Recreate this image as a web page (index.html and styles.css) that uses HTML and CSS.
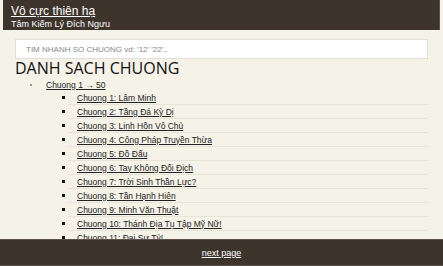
FILE: index.html
```html
<!DOCTYPE html>
<html lang="vi">
<head>
<meta charset="utf-8">
<title>Vô cực thiên hạ</title>
<link rel="stylesheet" href="styles.css">
</head>
<body>
<header class="top">
  <a class="book-title" href="#">Vô cực thiên hạ</a>
  <div class="author">Tâm Kiếm Lý Đích Ngưu</div>
</header>
<main class="content">
  <input class="search" type="text" placeholder="TIM NHANH SO CHUONG vd: '12' '22'..">
  <h1 class="heading">DANH SACH CHUONG</h1>
  <ul class="groups">
    <li class="group">
      <div class="group-row"><span class="dot"></span><a href="#">Chuong 1 → 50</a></div>
      <ul class="chapters">
        <li class="chapter"><span class="sq"></span><a href="#">Chuong 1: Lâm Minh</a></li>
        <li class="chapter"><span class="sq"></span><a href="#">Chuong 2: Tầng Đá Kỳ Dị</a></li>
        <li class="chapter"><span class="sq"></span><a href="#">Chuong 3: Linh Hồn Vô Chủ</a></li>
        <li class="chapter"><span class="sq"></span><a href="#">Chuong 4: Công Pháp Truyền Thừa</a></li>
        <li class="chapter"><span class="sq"></span><a href="#">Chuong 5: Đồ Đấu</a></li>
        <li class="chapter"><span class="sq"></span><a href="#">Chuong 6: Tay Không Đối Địch</a></li>
        <li class="chapter"><span class="sq"></span><a href="#">Chuong 7: Trời Sinh Thần Lực?</a></li>
        <li class="chapter"><span class="sq"></span><a href="#">Chuong 8: Tần Hạnh Hiên</a></li>
        <li class="chapter"><span class="sq"></span><a href="#">Chuong 9: Minh Văn Thuật</a></li>
        <li class="chapter"><span class="sq"></span><a href="#">Chuong 10: Thánh Địa Tụ Tập Mỹ Nữ!</a></li>
        <li class="chapter"><span class="sq"></span><a href="#">Chuong 11: Đại Sư Tỷ!</a></li>
        <li class="chapter"><span class="sq"></span><a href="#">Chuong 12: Luyện Đan</a></li>
      </ul>
    </li>
  </ul>
</main>
<footer class="bottom">
  <a href="#">next page</a>
</footer>
</body>
</html>
```
FILE: styles.css
```css
html, body {
  margin: 0;
  padding: 0;
  height: 100%;
  overflow: hidden;
}
body {
  background: #f5f2e7;
  font-family: "Liberation Sans", Arial, sans-serif;
  color: #333;
}
.top {
  margin: 0 3px;
  background: #3d342c;
  border-right: 1px solid #5a5149;
  padding: 5px 0 4px 8px;
  height: 21px;
  display: flex;
  flex-direction: column;
}
.book-title {
  color: #fff;
  font-size: 12px;
  line-height: 12px;
}
.author {
  color: #fff;
  font-size: 9px;
  line-height: 12px;
  margin-top: 1px;
}
.content {
  padding: 9px 15px 0 15px;
}
.search {
  display: block;
  box-sizing: border-box;
  width: 413px;
  height: 20px;
  border: 1px solid #e2dfd6;
  background: #fff;
  padding: 0 10px;
  font-family: "Liberation Sans", Arial, sans-serif;
  font-size: 8px;
  color: #777;
  outline: none;
}
.search::placeholder {
  color: #888;
}
.heading {
  margin: 0 0 1px 0;
  font-family: "Open Sans", sans-serif;
  font-weight: 400;
  font-size: 16px;
  line-height: 18px;
  color: #111;
}
.groups {
  list-style: none;
  margin: 0;
  padding: 0;
}
.group-row {
  display: flex;
  align-items: center;
  height: 13px;
  font-size: 8.5px;
}
.dot {
  width: 2px;
  height: 2px;
  background: #999;
  margin-left: 15px;
  margin-right: 14px;
}
a {
  color: #222;
  text-decoration: underline;
}
.chapters {
  list-style: none;
  margin: 0;
  padding: 0 0 0 53px;
}
.chapter {
  display: flex;
  align-items: center;
  height: 13px;
  border-bottom: 1px solid #e7e3d9;
  font-size: 8.5px;
}
.sq {
  width: 3px;
  height: 3px;
  background: #111;
  margin-left: -6px;
  margin-right: 12px;
}
.bottom {
  position: fixed;
  left: 0;
  right: 0;
  bottom: 0;
  height: 25px;
  background: #3d342c;
  border-top: 1px solid #5a5149;
  border-bottom: 1px solid #5a5149;
  display: flex;
  align-items: center;
  justify-content: center;
  font-size: 9px;
}
.bottom a {
  color: #fff;
}
```
